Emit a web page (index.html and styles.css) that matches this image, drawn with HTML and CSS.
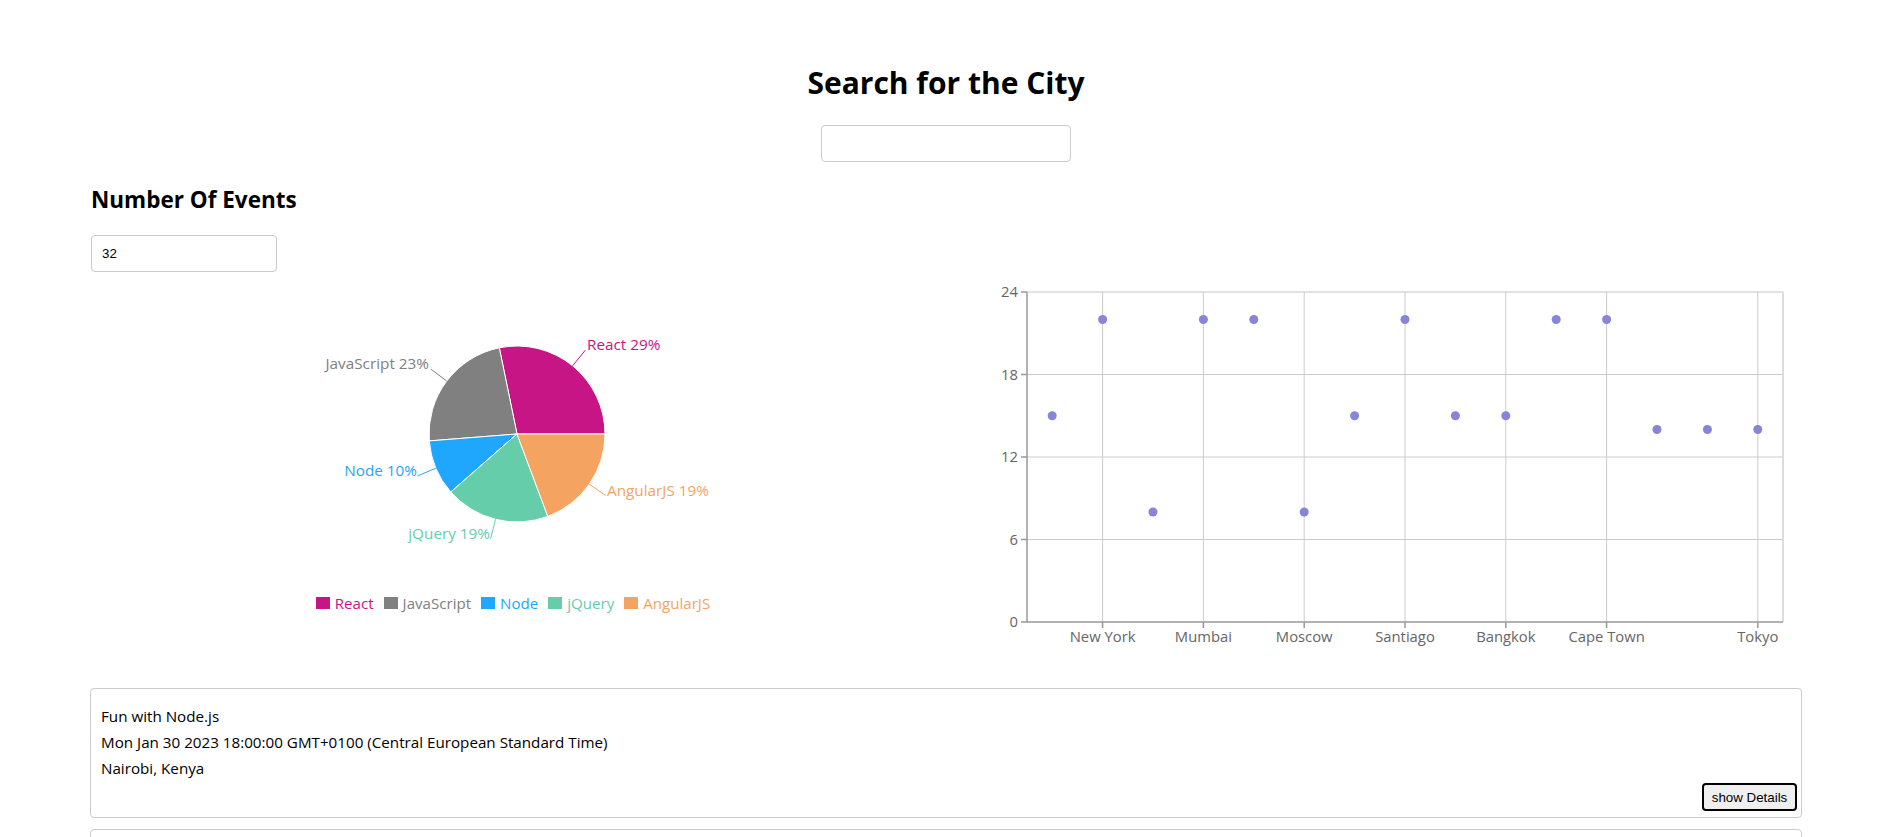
FILE: index.html
```html
<!DOCTYPE html>
<html lang="en">
<head>
<meta charset="utf-8">
<title>Meet App</title>
<link rel="stylesheet" href="styles.css">
</head>
<body>
<div class="app">
  <section class="city-search">
    <h1 class="title">Search for the City</h1>
    <input class="city-input" type="text">
  </section>
  <section class="number-events">
    <h2 class="subtitle">Number Of Events</h2>
    <input class="number-input" type="text" value="32">
  </section>
  <section class="charts">
    <div class="chart pie-chart">
      <svg class="pie-svg" width="856" height="321" viewBox="0 0 856 321">
        <g stroke="#fff" stroke-width="1">
          <path fill="#c71585" d="M427,162 L515,162 A88,88 0 0 0 409.3,75.8 Z"/>
          <path fill="#808080" d="M427,162 L409.3,75.8 A88,88 0 0 0 339.3,168.9 Z"/>
          <path fill="#1ea7fd" d="M427,162 L339.3,168.9 A88,88 0 0 0 360.8,220 Z"/>
          <path fill="#66cdaa" d="M427,162 L360.8,220 A88,88 0 0 0 457.8,244.4 Z"/>
          <path fill="#f4a460" d="M427,162 L457.8,244.4 A88,88 0 0 0 515,162 Z"/>
        </g>
        <g fill="none" stroke-width="1">
          <path stroke="#c71585" d="M482.6,93.8 L495.2,78.3"/>
          <path stroke="#808080" d="M356.7,109 L340.7,97"/>
          <path stroke="#1ea7fd" d="M345.9,196.2 L327.5,203.9"/>
          <path stroke="#66cdaa" d="M405.5,247.3 L400.6,266.7"/>
          <path stroke="#f4a460" d="M499.3,212.2 L515.7,223.5"/>
        </g>
        <g class="pie-label">
          <text x="497" y="78" fill="#c71585">React 29%</text>
          <text x="339" y="97" fill="#808080" text-anchor="end">JavaScript 23%</text>
          <text x="327" y="204" fill="#1ea7fd" text-anchor="end">Node 10%</text>
          <text x="400" y="267" fill="#66cdaa" text-anchor="end">jQuery 19%</text>
          <text x="517" y="224" fill="#f4a460">AngularJS 19%</text>
        </g>
      </svg>
      <ul class="legend">
        <li class="legend-item react"><span class="swatch"></span>React</li>
        <li class="legend-item js"><span class="swatch"></span>JavaScript</li>
        <li class="legend-item node"><span class="swatch"></span>Node</li>
        <li class="legend-item jquery"><span class="swatch"></span>jQuery</li>
        <li class="legend-item angular"><span class="swatch"></span>AngularJS</li>
      </ul>
    </div>
    <div class="chart scatter-chart">
      <svg class="scatter-svg" width="856" height="400" viewBox="0 0 856 400">
        <g class="grid" stroke="#ccc" stroke-width="1" fill="none">
          <line x1="81" y1="267.5" x2="837" y2="267.5"/>
          <line x1="81" y1="185" x2="837" y2="185"/>
          <line x1="81" y1="102.5" x2="837" y2="102.5"/>
          <line x1="81" y1="20" x2="837" y2="20" stroke="#e2e2e2" stroke-width="2"/>
          <line x1="156.6" y1="20" x2="156.6" y2="350"/>
          <line x1="257.4" y1="20" x2="257.4" y2="350"/>
          <line x1="358.2" y1="20" x2="358.2" y2="350"/>
          <line x1="459" y1="20" x2="459" y2="350"/>
          <line x1="559.8" y1="20" x2="559.8" y2="350"/>
          <line x1="660.6" y1="20" x2="660.6" y2="350"/>
          <line x1="811.8" y1="20" x2="811.8" y2="350"/>
          <line x1="837" y1="20" x2="837" y2="350" stroke="#ddd" stroke-width="2"/>
        </g>
        <g class="axis" stroke="#999" stroke-width="1.5" fill="none">
          <line x1="81" y1="20" x2="81" y2="350"/>
          <line x1="81" y1="350" x2="837" y2="350"/>
          <line x1="75" y1="20" x2="81" y2="20"/>
          <line x1="75" y1="102.5" x2="81" y2="102.5"/>
          <line x1="75" y1="185" x2="81" y2="185"/>
          <line x1="75" y1="267.5" x2="81" y2="267.5"/>
          <line x1="75" y1="350" x2="81" y2="350"/>
          <line x1="156.6" y1="350" x2="156.6" y2="356"/>
          <line x1="257.4" y1="350" x2="257.4" y2="356"/>
          <line x1="358.2" y1="350" x2="358.2" y2="356"/>
          <line x1="459" y1="350" x2="459" y2="356"/>
          <line x1="559.8" y1="350" x2="559.8" y2="356"/>
          <line x1="660.6" y1="350" x2="660.6" y2="356"/>
          <line x1="811.8" y1="350" x2="811.8" y2="356"/>
        </g>
        <g class="tick-label" text-anchor="end">
          <text x="72" y="25">24</text>
          <text x="72" y="107.5">18</text>
          <text x="72" y="190">12</text>
          <text x="72" y="272.5">6</text>
          <text x="72" y="355">0</text>
        </g>
        <g class="tick-label" text-anchor="middle">
          <text x="156.6" y="370">New York</text>
          <text x="257.4" y="370">Mumbai</text>
          <text x="358.2" y="370">Moscow</text>
          <text x="459" y="370">Santiago</text>
          <text x="559.8" y="370">Bangkok</text>
          <text x="660.6" y="370">Cape Town</text>
          <text x="811.8" y="370">Tokyo</text>
        </g>
        <g class="dots" fill="#8884d8">
          <circle cx="106.2" cy="143.75" r="4.5"/>
          <circle cx="156.6" cy="47.5" r="4.5"/>
          <circle cx="207" cy="240" r="4.5"/>
          <circle cx="257.4" cy="47.5" r="4.5"/>
          <circle cx="307.8" cy="47.5" r="4.5"/>
          <circle cx="358.2" cy="240" r="4.5"/>
          <circle cx="408.6" cy="143.75" r="4.5"/>
          <circle cx="459" cy="47.5" r="4.5"/>
          <circle cx="509.4" cy="143.75" r="4.5"/>
          <circle cx="559.8" cy="143.75" r="4.5"/>
          <circle cx="610.2" cy="47.5" r="4.5"/>
          <circle cx="660.6" cy="47.5" r="4.5"/>
          <circle cx="711" cy="157.5" r="4.5"/>
          <circle cx="761.4" cy="157.5" r="4.5"/>
          <circle cx="811.8" cy="157.5" r="4.5"/>
        </g>
      </svg>
    </div>
  </section>
  <ul class="event-list">
    <li class="event">
      <p class="event-line">Fun with Node.js</p>
      <p class="event-line">Mon Jan 30 2023 18:00:00 GMT+0100 (Central European Standard Time)</p>
      <p class="event-line">Nairobi, Kenya</p>
      <div class="event-actions"><button class="details-btn" type="button">show Details</button></div>
    </li>
    <li class="event">
      <p class="event-line">Fun with Node.js</p>
      <p class="event-line">Mon Jan 30 2023 18:00:00 GMT+0100 (Central European Standard Time)</p>
      <p class="event-line">Nairobi, Kenya</p>
      <div class="event-actions"><button class="details-btn" type="button">show Details</button></div>
    </li>
  </ul>
</div>
</body>
</html>
```
FILE: styles.css
```css
* { box-sizing: border-box; }

html, body {
  margin: 0;
  padding: 0;
  background: #fff;
  overflow: hidden;
}

body {
  font-family: "Open Sans", "Noto Sans", sans-serif;
  color: #000;
}

.app {
  padding: 63px 91px 0 90px;
}

.city-search {
  display: flex;
  flex-direction: column;
  align-items: center;
}

.title {
  margin: 0;
  font-size: 30px;
  line-height: 40px;
  font-weight: 700;
}

.city-input {
  margin-top: 22px;
  width: 250px;
  height: 37px;
  border: 1px solid #ccc;
  border-radius: 4px;
  font: 13.33px "Liberation Sans", Arial, sans-serif;
  padding: 0 10px;
}

.number-events {
  display: flex;
  flex-direction: column;
  align-items: flex-start;
  margin-top: 22px;
}

.subtitle {
  margin: 0 0 0 1px;
  font-size: 22.5px;
  line-height: 32px;
  font-weight: 700;
}

.number-input {
  margin-top: 19px;
  margin-left: 1px;
  width: 186px;
  height: 37px;
  border: 1px solid #ccc;
  border-radius: 4px;
  font: 13.33px "Liberation Sans", Arial, sans-serif;
  padding: 0 10px;
  color: #000;
}

.charts {
  display: grid;
  grid-template-columns: 1fr 1fr;
  height: 400px;
}

.chart {
  display: flex;
  flex-direction: column;
  align-items: center;
}

.pie-svg, .scatter-svg {
  display: block;
}

.pie-label text {
  font-size: 15.3px;
}

.tick-label text {
  font-size: 14.8px;
  fill: #666;
}

.legend {
  list-style: none;
  margin: 0;
  padding: 0;
  display: flex;
  gap: 10px;
  font-size: 15.1px;
  line-height: 20px;
  transform: translateX(-5px);
}

.legend-item {
  display: flex;
  align-items: center;
}

.swatch {
  width: 14px;
  height: 12px;
  margin-right: 5px;
  background: currentColor;
}

.legend-item.react { color: #c71585; }
.legend-item.js { color: #808080; }
.legend-item.node { color: #1ea7fd; }
.legend-item.jquery { color: #66cdaa; }
.legend-item.angular { color: #f4a460; }

.event-list {
  list-style: none;
  margin: 16px 0 0;
  padding: 0;
  display: flex;
  flex-direction: column;
  gap: 11px;
}

.event {
  border: 1px solid #ccc;
  border-radius: 4px;
  padding: 14px 4px 6px 10px;
  display: flex;
  flex-direction: column;
}

.event-line {
  margin: 0;
  font-size: 15.2px;
  line-height: 26px;
}

.event-actions {
  display: flex;
  justify-content: flex-end;
  margin-top: 2px;
}

.details-btn {
  font: 13.33px "Liberation Sans", Arial, sans-serif;
  color: #000;
  background: #efefef;
  border: 2px solid #000;
  border-radius: 4px;
  height: 28px;
  width: 95px;
  padding: 0;
}
```
